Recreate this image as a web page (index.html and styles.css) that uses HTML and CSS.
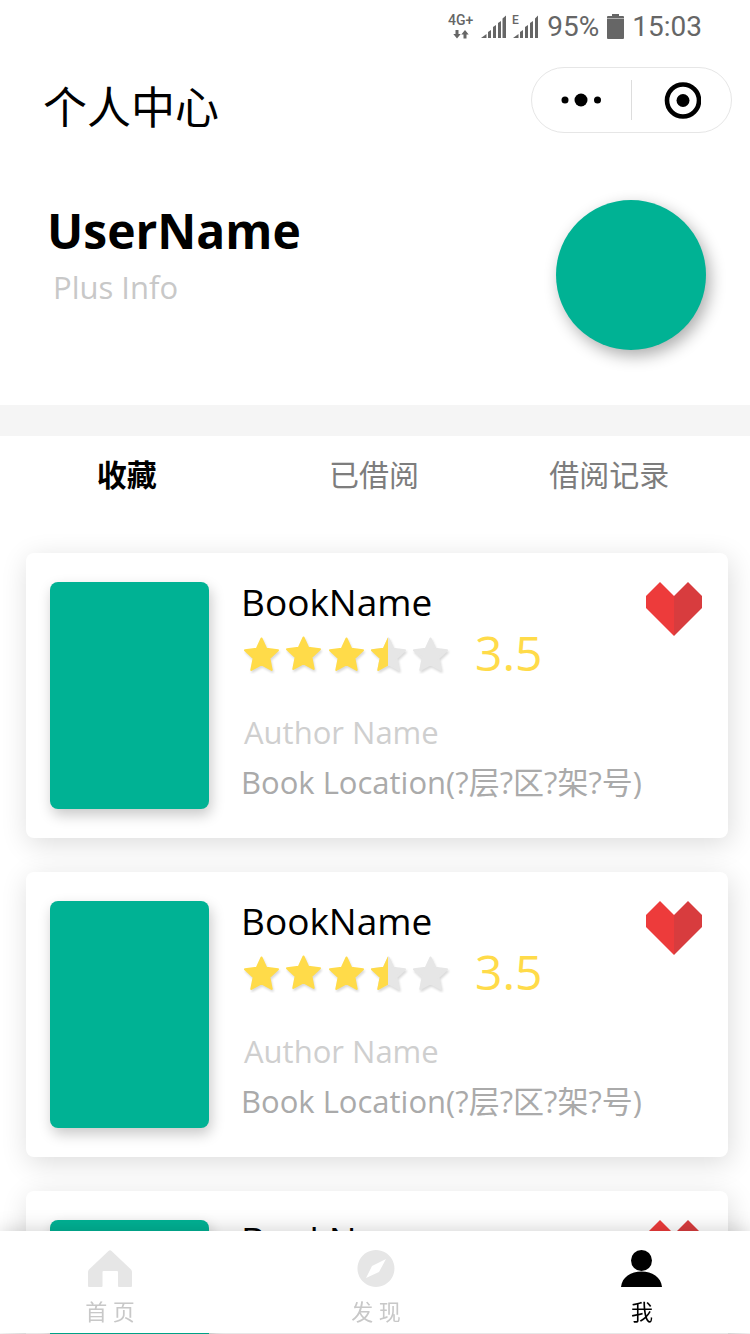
FILE: index.html
```
<!DOCTYPE html>
<html lang="zh-CN">
<head>
<meta charset="utf-8">
<meta name="viewport" content="width=device-width, initial-scale=1">
<title>个人中心</title>
<link rel="stylesheet" href="styles.css">
</head>
<body>
<svg class="defs" width="0" height="0" aria-hidden="true">
  <defs>
    <path id="star" d="M18.500 2.500L23.300 12.800L35 14.200L26.400 22.200L28.700 34L18.500 28.300L8.300 34L10.600 22.200L2 14.200L13.700 12.800Z" stroke-width="2" stroke-linejoin="round"/>
    <clipPath id="left-half"><rect x="0" y="0" width="18" height="40"/></clipPath>
    <symbol id="rating" viewBox="0 0 212 42">
      <g class="star-on shaded">
        <use href="#star" x="2" y="4"/>
        <use href="#star" x="44" y="3"/>
        <use href="#star" x="87" y="4"/>
      </g>
      <g transform="translate(129 4)">
        <use class="star-off shaded" href="#star"/>
        <g clip-path="url(#left-half)"><use class="star-on" href="#star"/></g>
      </g>
      <use class="star-off shaded" href="#star" x="171" y="4"/>
    </symbol>
    <symbol id="heart" viewBox="0 0 56 54">
      <path fill="#ed3b3b" d="M0 14L14 0L28 14V54L0 26Z"/>
      <path fill="#d83c3e" d="M56 14L42 0L28 14V54L56 26Z"/>
    </symbol>
  </defs>
</svg>

<main class="page">
  <div class="status">
    <svg class="status-signal" width="92" height="30" viewBox="0 0 92 30" aria-hidden="true">
      <text class="net" x="1" y="15">4G+</text>
      <text class="net net-small" x="65" y="14">E</text>
      <path d="M8.500 20h3v4h2.200L10 28.500L6.300 24h2.200zM16.500 28.500h3v-4h2.200L18 20L14.300 24.500h2.200z"/>
      <path d="M34 28l5.500-4v4zM41 28v-6l3-2v8zM46 28V17l3-2v13zM51 28V13l3-2v17zM55.500 28V8.500l3.500-3V28z"/>
      <path d="M66 28l5.500-4v4zM73 28v-6l3-2v8zM78 28V17l3-2v13zM83 28V13l3-2v17zM88 28V8.500l3-3V28z"/>
    </svg>
    <span>95%</span>
    <svg width="17" height="26" viewBox="0 0 17 26" aria-hidden="true"><path d="M1 2h4V0h7v2h4q1 0 1 1v1H0V3q0-1 1-1zM0 4.500h17v19.500q0 1-1 1H1q-1 0-1-1z"/></svg>
    <span>15:03</span>
  </div>

  <header class="topbar">
    <h1>个人中心</h1>
    <div class="capsule">
      <button type="button" aria-label="更多">
        <svg width="42" height="14" viewBox="0 0 42 14"><circle cx="4" cy="7" r="3.500"/><circle cx="20" cy="7" r="6.500"/><circle cx="36.500" cy="7" r="3.500"/></svg>
      </button>
      <button type="button" aria-label="关闭">
        <svg width="38" height="38" viewBox="0 0 38 38"><circle cx="20" cy="19.500" r="16" fill="none" stroke="#000" stroke-width="4.600"/><circle cx="20" cy="19.500" r="6.500"/></svg>
      </button>
    </div>
  </header>

  <section class="profile">
    <div>
      <h2>UserName</h2>
      <p>Plus Info</p>
    </div>
    <div class="avatar"></div>
  </section>

  <div class="tabs" role="tablist">
    <button type="button" role="tab" aria-selected="true">收藏</button>
    <button type="button" role="tab" aria-selected="false">已借阅</button>
    <button type="button" role="tab" aria-selected="false">借阅记录</button>
  </div>

  <ul class="books">
    <li class="card">
      <div class="cover"></div>
      <div class="info">
        <h3>BookName</h3>
        <div class="score"><svg width="212" height="42" aria-hidden="true"><use href="#rating"/></svg><span>3.5</span></div>
        <p class="author">Author Name</p>
        <p class="place">Book Location(?层?区?架?号)</p>
      </div>
      <button class="like" type="button" aria-label="收藏"><svg width="56" height="54"><use href="#heart"/></svg></button>
    </li>
    <li class="card">
      <div class="cover"></div>
      <div class="info">
        <h3>BookName</h3>
        <div class="score"><svg width="212" height="42" aria-hidden="true"><use href="#rating"/></svg><span>3.5</span></div>
        <p class="author">Author Name</p>
        <p class="place">Book Location(?层?区?架?号)</p>
      </div>
      <button class="like" type="button" aria-label="收藏"><svg width="56" height="54"><use href="#heart"/></svg></button>
    </li>
    <li class="card">
      <div class="cover"></div>
      <div class="info">
        <h3>BookName</h3>
        <div class="score"><svg width="212" height="42" aria-hidden="true"><use href="#rating"/></svg><span>3.5</span></div>
        <p class="author">Author Name</p>
        <p class="place">Book Location(?层?区?架?号)</p>
      </div>
      <button class="like" type="button" aria-label="收藏"><svg width="56" height="54"><use href="#heart"/></svg></button>
    </li>
  </ul>
</main>

<nav class="tabbar">
  <a href="#home">
    <svg width="44" height="38" viewBox="0 0 44 38" aria-hidden="true"><path d="M20.500 1Q22 -.5 23.500 1L43 19.500Q44 20.500 44 22V36Q44 37 43 37H31Q30 37 30 36V22Q30 21 29 21H15.500Q14.500 21 14.500 22V36Q14.500 37 13.500 37H1Q0 37 0 36V22Q0 20.500 1 19.500Z"/></svg>
    <span>首 页</span>
  </a>
  <a href="#discover">
    <svg width="38" height="38" viewBox="0 0 38 38" aria-hidden="true"><path fill-rule="evenodd" d="M19 0A18.500 18.500 0 1 1 18.900 0ZM29 9L15 16L9 28L22 22Z"/></svg>
    <span>发 现</span>
  </a>
  <a class="current" href="#me" aria-current="page">
    <svg width="42" height="38" viewBox="0 0 42 38" aria-hidden="true"><circle cx="20.500" cy="10.500" r="10.500"/><path d="M0 37C1 27 10 21.500 20.500 21.500S40 27 41 37Z"/></svg>
    <span>我</span>
  </a>
</nav>
</body>
</html>
```
FILE: styles.css
```
* {
  box-sizing: border-box;
}

body,
h1,
h2,
h3,
p,
ul {
  margin: 0;
  padding: 0;
}

body {
  background: #fff;
  color: #000;
  font-family: "Open Sans", "Noto Sans CJK SC", sans-serif;
}

button {
  display: flex;
  align-items: center;
  justify-content: center;
  padding: 0;
  border: 0;
  background: none;
  color: inherit;
  font: inherit;
  cursor: pointer;
}

svg {
  display: block;
  flex: none;
}

.defs {
  position: absolute;
}

.page {
  height: 100vh;
  overflow-y: auto;
  scrollbar-width: none;
}

.status {
  display: flex;
  align-items: center;
  justify-content: flex-end;
  gap: 8px;
  height: 54px;
  padding-right: 48px;
  color: #666;
  fill: #666;
  font: 28px/32px Roboto, sans-serif;
}

.net {
  font: 500 14px Roboto, sans-serif;
}

.net-small {
  font-size: 12px;
}

.status-signal {
  margin-top: -4px;
}

.topbar {
  display: flex;
  align-items: center;
  justify-content: space-between;
  padding: 13px 18px 0 43px;
}

.topbar h1 {
  padding-top: 14px;
  font-size: 44px;
  line-height: 52px;
  font-weight: 400;
}

.capsule {
  display: flex;
  width: 201px;
  height: 66px;
  padding: 12px 0;
  border: 1px solid #e6e6e6;
  border-radius: 33px;
}

.capsule button {
  flex: 1;
}

.capsule button + button {
  border-left: 1px solid #ddd;
}

.profile {
  display: flex;
  align-items: flex-start;
  justify-content: space-between;
  padding: 67px 44px 55px 47px;
  border-bottom: 31px solid #f5f5f5;
}

.profile h2 {
  font-size: 48px;
  line-height: 62px;
  font-weight: 700;
}

.profile p {
  padding-left: 6px;
  color: #c8c8c8;
  font-size: 31px;
  line-height: 50px;
}

.avatar {
  width: 150px;
  height: 150px;
  border-radius: 50%;
  background: #00b294;
  box-shadow: 4px 6px 16px rgba(0, 0, 0, 0.32);
}

.tabs {
  display: grid;
  grid-template-columns: 21fr 20fr 19fr;
  padding: 16px 26px 0 0;
  color: #7d7d7d;
  font-size: 30px;
  line-height: 46px;
}

.tabs [aria-selected="true"] {
  color: #000;
  font-weight: 700;
}

.books {
  display: flex;
  flex-direction: column;
  gap: 34px;
  padding: 55px 22px 136px 26px;
  list-style: none;
}

.card {
  display: flex;
  align-items: flex-start;
  gap: 32px;
  padding: 29px 26px 29px 24px;
  border-radius: 8px;
  background: #fff;
  box-shadow: 2px 6px 28px rgba(0, 0, 0, 0.14);
}

.cover {
  flex: none;
  width: 159px;
  height: 227px;
  border-radius: 8px;
  background: #00b294;
  box-shadow: 2px 6px 14px rgba(0, 0, 0, 0.22);
}

.info {
  flex: 1;
  min-width: 0;
  white-space: nowrap;
}

.info h3 {
  font-size: 37px;
  line-height: 40px;
  font-weight: 400;
}

.score {
  display: flex;
  align-items: center;
  gap: 22px;
  height: 62px;
  color: #ffdb49;
  font-size: 48px;
  line-height: 62px;
}

.star-on {
  fill: #ffdb49;
  stroke: #ffdb49;
}

.star-off {
  fill: #e6e6e6;
  stroke: #e6e6e6;
}

.shaded {
  filter: drop-shadow(1px 2px 1px rgba(0, 0, 0, 0.15));
}

.author {
  padding: 23px 0 0 3px;
  color: #cfcfcf;
  font-size: 31px;
  line-height: 50px;
}

.place {
  color: #aaa;
  font-size: 31px;
  line-height: 50px;
}

.like {
  flex: none;
}

.tabbar {
  position: fixed;
  right: 0;
  bottom: 1px;
  left: 0;
  display: flex;
  justify-content: space-between;
  height: 102px;
  padding: 19px 84px 0 86px;
  background: #fff;
  box-shadow: 0 0 20px rgba(0, 0, 0, 0.2);
}

.tabbar a {
  display: flex;
  flex-direction: column;
  align-items: center;
  gap: 8px;
  width: 48px;
  color: #c8c8c8;
  fill: #e6e6e6;
  font-size: 22px;
  line-height: 30px;
  text-decoration: none;
  white-space: nowrap;
}

.tabbar .current {
  color: #000;
  fill: #000;
}
```
